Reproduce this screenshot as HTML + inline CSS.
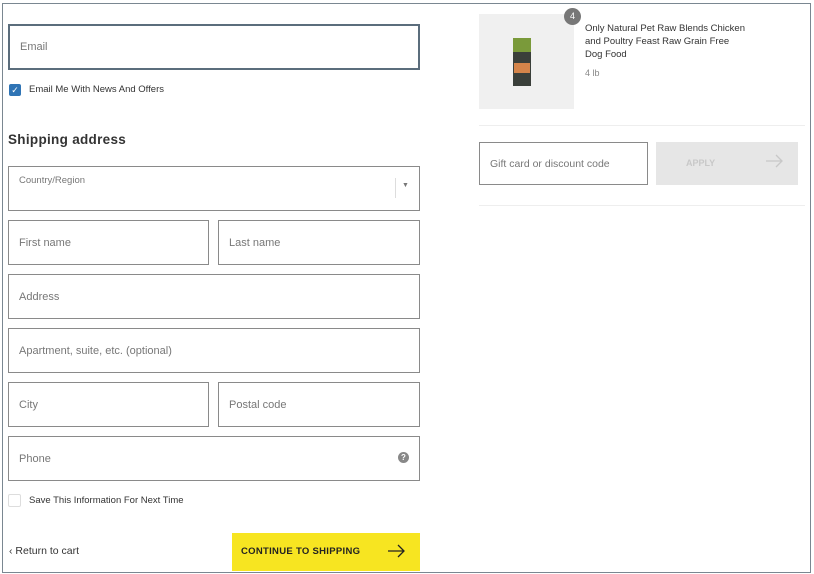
<!DOCTYPE html>
<html><head><style>
body{margin:0;width:814px;height:574px;background:#fff;font-family:"Liberation Sans",sans-serif;position:relative;overflow:hidden}
.a{position:absolute;box-sizing:border-box}
.f{border:1px solid #8a8a8a;color:#777;font-size:11px;padding-left:10px;display:flex;align-items:center}
.t{position:absolute;white-space:nowrap}
</style></head><body>
<div class="a" style="left:2px;top:3px;width:809px;height:570px;border:1.5px solid #7a8791"></div>
<div class="a f" style="left:8px;top:24px;width:412px;height:46px;border:2px solid #5b6d7c">Email</div>
<div class="a" style="left:9px;top:84px;width:12px;height:12px;background:#2f74b5;border-radius:2px;color:#fff;font-size:9px;text-align:center;line-height:12px">✓</div>
<div class="t" style="left:29px;top:84px;font-size:9.5px;color:#333">Email Me With News And Offers</div>
<div class="t" style="left:8px;top:132px;font-size:13.5px;font-weight:bold;color:#333;letter-spacing:.3px">Shipping address</div>
<div class="a f" style="left:8px;top:166px;width:412px;height:45px;align-items:flex-start;padding-top:8px;font-size:9.5px">Country/Region</div>
<div class="a" style="left:395px;top:178px;width:1px;height:20px;background:#ddd"></div>
<div class="t" style="left:402px;top:182px;font-size:7px;color:#777">▼</div>
<div class="a f" style="left:8px;top:220px;width:201px;height:45px">First name</div>
<div class="a f" style="left:218px;top:220px;width:202px;height:45px">Last name</div>
<div class="a f" style="left:8px;top:274px;width:412px;height:45px">Address</div>
<div class="a f" style="left:8px;top:328px;width:412px;height:45px">Apartment, suite, etc. (optional)</div>
<div class="a f" style="left:8px;top:382px;width:201px;height:45px">City</div>
<div class="a f" style="left:218px;top:382px;width:202px;height:45px">Postal code</div>
<div class="a f" style="left:8px;top:436px;width:412px;height:45px">Phone</div>
<div class="a" style="left:398px;top:452px;width:11px;height:11px;border-radius:50%;background:#888;color:#fff;font-size:8px;font-weight:bold;text-align:center;line-height:11px">?</div>
<div class="a" style="left:8px;top:494px;width:13px;height:13px;border:1px solid #ddd;border-radius:2px"></div>
<div class="t" style="left:29px;top:495px;font-size:9.5px;color:#333">Save This Information For Next Time</div>
<div class="t" style="left:9px;top:545px;font-size:10.5px;color:#333">‹ Return to cart</div>
<div class="a" style="left:232px;top:533px;width:188px;height:38px;background:#f7e521"></div>
<div class="t" style="left:241px;top:546px;font-size:9.5px;font-weight:bold;color:#222;letter-spacing:.3px">CONTINUE TO SHIPPING</div>
<svg class="a" style="left:386px;top:543px" width="20" height="16"><path d="M2 8H18M12 2L18 8L12 14" stroke="#222" stroke-width="1.3" fill="none"/></svg>
<div class="a" style="left:479px;top:14px;width:95px;height:95px;background:#f0f0f0"></div>
<div class="a" style="left:513px;top:38px;width:18px;height:48px;background:#3a3f3a"></div>
<div class="a" style="left:513px;top:38px;width:18px;height:14px;background:#7a9a3a"></div>
<div class="a" style="left:514px;top:63px;width:16px;height:10px;background:#d4844a"></div>
<div class="a" style="left:564px;top:8px;width:17px;height:17px;border-radius:50%;background:#777;color:#fff;font-size:9px;text-align:center;line-height:17px">4</div>
<div class="t" style="left:585px;top:22px;font-size:9.5px;color:#333;line-height:13px">Only Natural Pet Raw Blends Chicken<br>and Poultry Feast Raw Grain Free<br>Dog Food</div>
<div class="t" style="left:585px;top:68px;font-size:9px;color:#888">4 lb</div>
<div class="a" style="left:479px;top:125px;width:326px;height:1px;background:#eee"></div>
<div class="a f" style="left:479px;top:142px;width:169px;height:43px;font-size:10.5px">Gift card or discount code</div>
<div class="a" style="left:656px;top:142px;width:142px;height:43px;background:#e6e6e6"></div>
<div class="t" style="left:686px;top:158px;font-size:9px;font-weight:bold;color:#c8c8c8">APPLY</div>
<svg class="a" style="left:764px;top:153px" width="20" height="16"><path d="M2 8H18M12 2L18 8L12 14" stroke="#c8c8c8" stroke-width="1.3" fill="none"/></svg>
<div class="a" style="left:479px;top:205px;width:326px;height:1px;background:#eee"></div>
</body></html>
